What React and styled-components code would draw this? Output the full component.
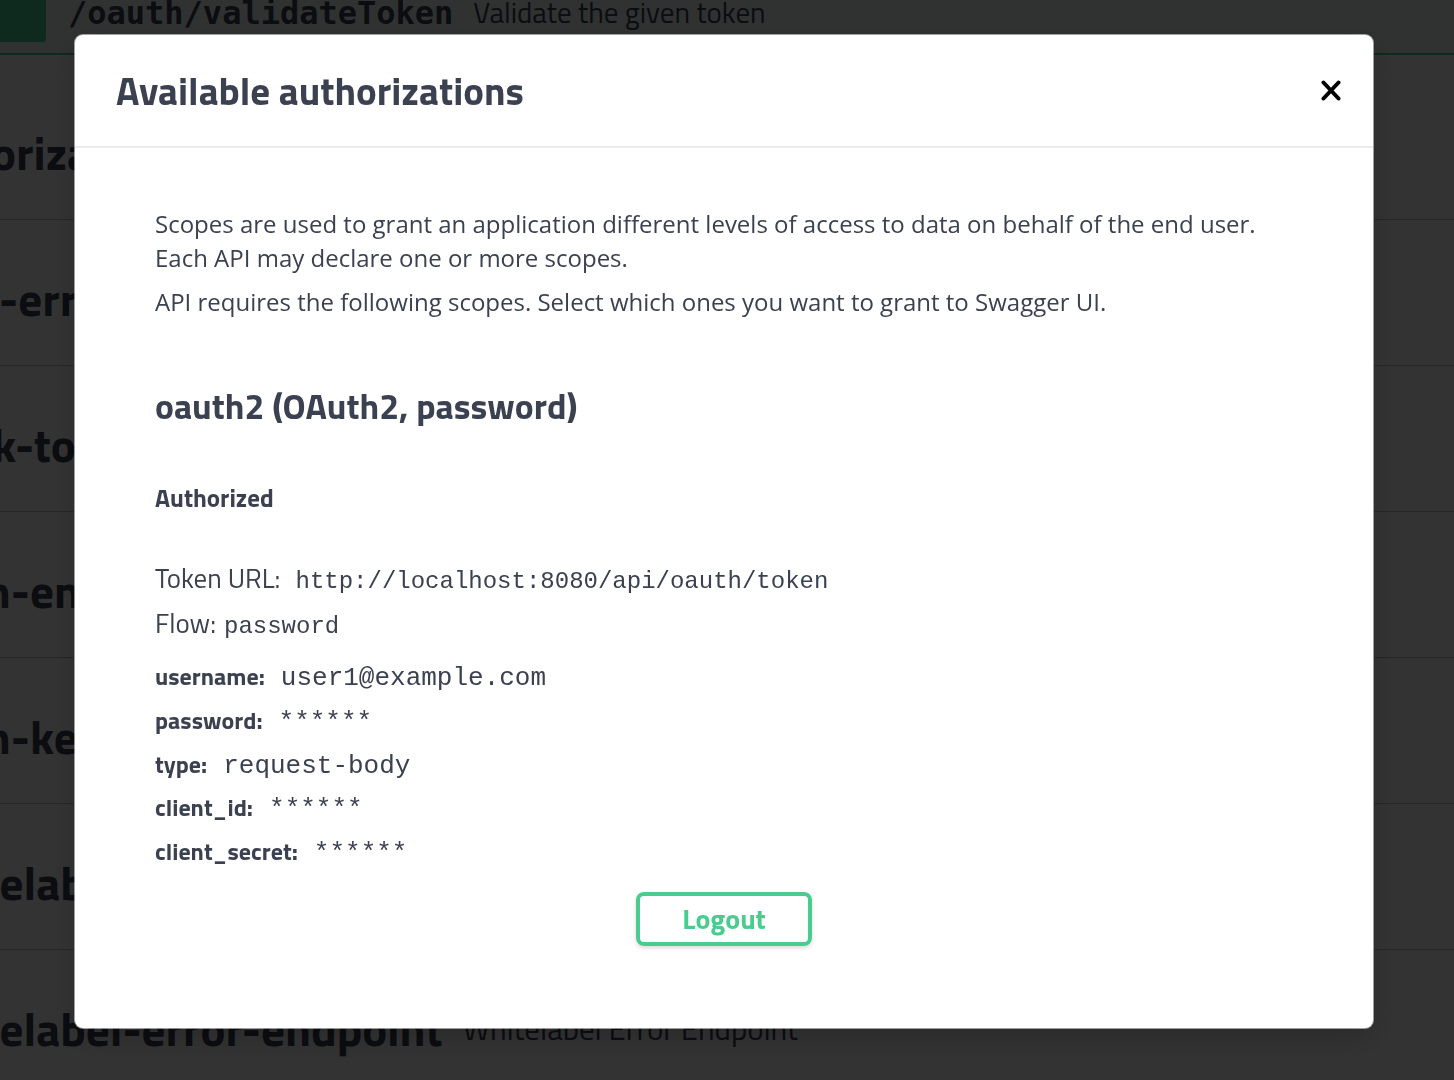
import React from 'react'
import styled, { createGlobalStyle } from 'styled-components'

const headFont = `"Titillium Web", "DejaVu Sans Condensed", "Liberation Sans Narrow", Roboto, sans-serif`
const bodyFont = `"Open Sans", "Noto Sans", sans-serif`
const monoFont = `"Liberation Mono", "Courier New", monospace`

const GlobalStyle = createGlobalStyle`
  body {
    margin: 0;
    overflow: hidden;
    background: #fff;
    color: #3b4151;
    font-family: ${bodyFont};
  }
  * { box-sizing: border-box; }
`

const tags = [
  { name: 'authorization-endpoint', desc: 'Authorization Endpoint', shift: 102 },
  { name: 'basic-error-controller', desc: 'Basic Error Controller', shift: 105 },
  { name: 'check-token-endpoint', desc: 'Check Token Endpoint', shift: 100 },
  { name: 'token-endpoint', desc: 'Token Endpoint', shift: 105 },
  { name: 'token-key-endpoint', desc: 'Token Key Endpoint', shift: 105 },
  { name: 'whitelabel-approval-endpoint', desc: 'Whitelabel Approval Endpoint', shift: 92 },
  { name: 'whitelabel-error-endpoint', desc: 'Whitelabel Error Endpoint', shift: 92 },
]

const fields = [
  { label: 'username:', value: 'user1@example.com' },
  { label: 'password:', value: '******' },
  { label: 'type:', value: 'request-body' },
  { label: 'client_id:', value: '******' },
  { label: 'client_secret:', value: '******' },
]

const CloseIcon = () => (
  <svg width="20" height="21" viewBox="0 0 20 21">
    <path d="M2.5 2.5 L17.5 18.5 M17.5 2.5 L2.5 18.5" stroke="#000" strokeWidth="4" strokeLinecap="round" />
  </svg>
)

export default function App() {
  return (
    <>
      <GlobalStyle />
      <Page>
        <OpBlock>
          <Summary>
            <MethodBadge />
            <OpPath>/oauth/validateToken</OpPath>
            <OpDesc>Validate the given token</OpDesc>
          </Summary>
        </OpBlock>
        {tags.map((t) => (
          <TagRow key={t.name}>
            <TagTitle $shift={t.shift}>{t.name}</TagTitle>
            <TagDesc>{t.desc}</TagDesc>
          </TagRow>
        ))}
      </Page>

      <Overlay>
        <Modal>
          <Header>
            <Title>Available authorizations</Title>
            <CloseButton aria-label="close">
              <CloseIcon />
            </CloseButton>
          </Header>
          <Body>
            <Text>
              Scopes are used to grant an application different levels of access to data on behalf of the end user.
              <br />
              Each API may declare one or more scopes.
            </Text>
            <Text $gap>API requires the following scopes. Select which ones you want to grant to Swagger UI.</Text>

            <SchemeTitle>oauth2 (OAuth2, password)</SchemeTitle>
            <Authorized>Authorized</Authorized>

            <InfoRow $first>
              Token URL:<Code $wide>http://localhost:8080/api/oauth/token</Code>
            </InfoRow>
            <InfoRow>
              Flow:<Code>password</Code>
            </InfoRow>

            <Fields>
              {fields.map((f) => (
                <FieldRow key={f.label}>
                  <FieldLabel>{f.label}</FieldLabel>
                  <FieldValue>{f.value}</FieldValue>
                </FieldRow>
              ))}
            </Fields>

            <Actions>
              <LogoutButton>Logout</LogoutButton>
            </Actions>
          </Body>
        </Modal>
      </Overlay>
    </>
  )
}

const Page = styled.div`
  width: 100%;
`

const OpBlock = styled.div`
  height: 55px;
  margin-bottom: 19px;
  background: rgba(73, 204, 144, 0.1);
  border-bottom: 2px solid #49cc90;
`

const Summary = styled.div`
  display: flex;
  align-items: flex-start;
`

const MethodBadge = styled.div`
  width: 46px;
  height: 42px;
  flex-shrink: 0;
  margin-right: 22px;
  background: #49cc90;
  border-radius: 0 0 4px 0;
`

const OpPath = styled.span`
  margin-top: -5px;
  margin-right: 20px;
  font-family: "DejaVu Sans Mono", monospace;
  font-weight: 700;
  font-size: 32px;
  line-height: 36px;
  color: #3b4151;
`

const OpDesc = styled.span`
  margin-top: -6px;
  font-family: ${headFont};
  font-size: 29px;
  line-height: 36px;
  color: #3b4151;
`

const TagRow = styled.div`
  display: flex;
  align-items: center;
  gap: 20px;
  height: 146px;
  padding-top: 12px;
  border-bottom: 1px solid rgba(59, 65, 81, 0.3);
  white-space: nowrap;
`

const TagTitle = styled.span`
  margin-left: -${(p) => p.$shift}px;
  font-family: ${headFont};
  font-weight: 700;
  font-size: 47px;
  color: #3b4151;
`

const TagDesc = styled.span`
  font-family: ${headFont};
  font-size: 31px;
  color: #3b4151;
`

const Overlay = styled.div`
  position: fixed;
  inset: 0;
  background: rgba(0, 0, 0, 0.8);
  display: flex;
  align-items: flex-start;
`

const Modal = styled.div`
  width: 1298px;
  margin: 35px 0 0 75px;
  background: #fff;
  border-radius: 8px;
  box-shadow: 0 0 0 1px rgba(235, 235, 235, 0.6), 0 10px 30px 0 rgba(0, 0, 0, 0.2);
`

const Header = styled.div`
  display: flex;
  align-items: center;
  justify-content: space-between;
  height: 113px;
  padding: 0 32px 0 41px;
  border-bottom: 2px solid #ebebeb;
`

const Title = styled.h3`
  margin: 0;
  font-family: ${headFont};
  font-weight: 700;
  font-size: 39px;
  color: #3b4151;
`

const CloseButton = styled.button`
  display: flex;
  padding: 0;
  border: none;
  background: none;
  cursor: pointer;
`

const Body = styled.div`
  padding: 59px 80px 82px;
`

const Text = styled.p`
  margin: ${(p) => (p.$gap ? '10px' : '0')} 0 0;
  font-family: ${bodyFont};
  font-size: 24px;
  line-height: 34px;
  color: #3b4151;
`

const SchemeTitle = styled.h4`
  margin: 65px 0 0;
  font-family: ${headFont};
  font-weight: 700;
  font-size: 35.6px;
  line-height: 44px;
  color: #3b4151;
`

const Authorized = styled.h6`
  margin: 55px 0 0;
  font-family: ${headFont};
  font-weight: 700;
  font-size: 25px;
  line-height: 30px;
  color: #3b4151;
`

const InfoRow = styled.div`
  display: flex;
  align-items: baseline;
  height: 45px;
  margin-top: ${(p) => (p.$first ? '42px' : '0')};
  font-family: ${headFont};
  font-size: 27px;
  line-height: 45px;
  color: #3b4151;
`

const Code = styled.code`
  margin-left: ${(p) => (p.$wide ? '15px' : '8px')};
  font-family: ${monoFont};
  font-size: 24px;
  color: #3b4151;
`

const Fields = styled.div`
  display: flex;
  flex-direction: column;
  margin-top: 9px;
`

const FieldRow = styled.div`
  display: flex;
  align-items: baseline;
  gap: 16px;
  height: 43.75px;
  line-height: 44px;
`

const FieldLabel = styled.span`
  font-family: ${headFont};
  font-weight: 700;
  font-size: 24px;
  color: #3b4151;
`

const FieldValue = styled.code`
  font-family: ${monoFont};
  font-size: 26px;
  color: #3b4151;
`

const Actions = styled.div`
  display: flex;
  justify-content: center;
  margin-top: 19px;
`

const LogoutButton = styled.button`
  width: 176px;
  height: 54px;
  border: 4px solid #49cc90;
  border-radius: 8px;
  background: transparent;
  box-shadow: 0 2px 4px rgba(0, 0, 0, 0.15);
  font-family: ${headFont};
  font-weight: 700;
  font-size: 28px;
  color: #49cc90;
  cursor: pointer;
`
